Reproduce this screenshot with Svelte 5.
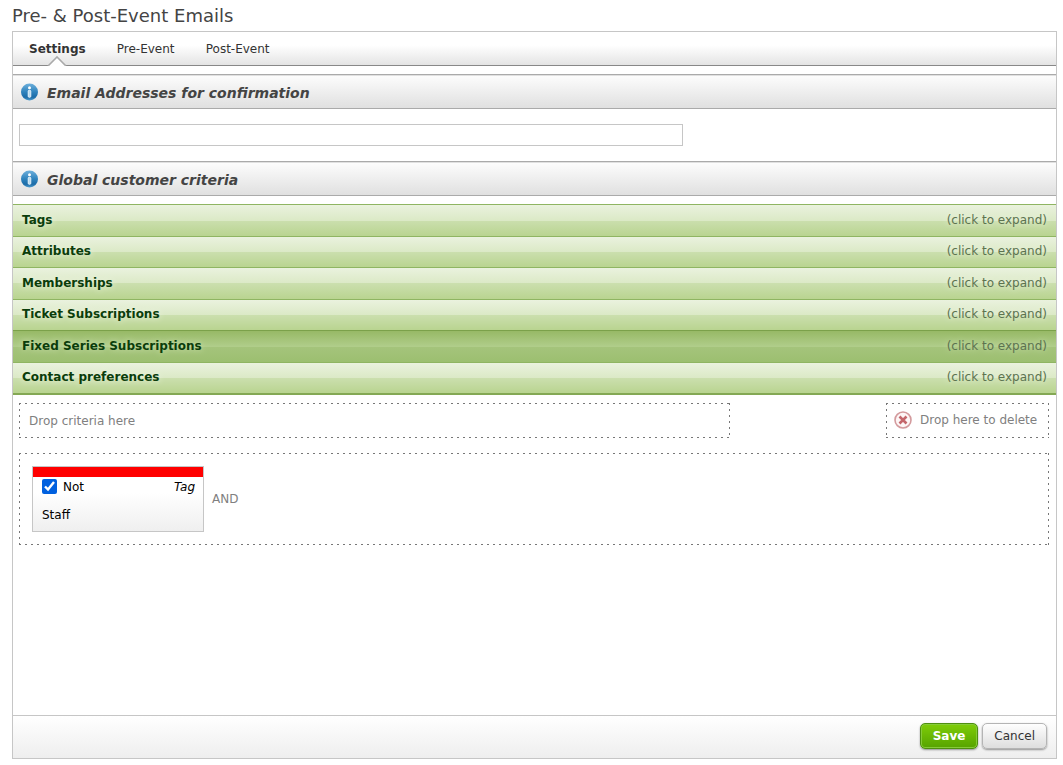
<script lang="ts">
	const tabs = ['Settings', 'Pre-Event', 'Post-Event'];
	const criteria = [
		'Tags',
		'Attributes',
		'Memberships',
		'Ticket Subscriptions',
		'Fixed Series Subscriptions',
		'Contact preferences'
	];

	let activeTab = $state('Settings');
	let selected = $state('Fixed Series Subscriptions');
	let emails = $state('');
	let not = $state(true);
</script>

{#snippet sectionHead(title: string)}
	<h2 class="section-head">
		<svg width="18" height="18" viewBox="0 0 18 18" aria-hidden="true">
			<defs>
				<linearGradient id="info-fill" x1="0" y1="0" x2="0" y2="1">
					<stop offset="0" stop-color="#6eb0dc" />
					<stop offset="0.5" stop-color="#2f83bd" />
					<stop offset="0.8" stop-color="#1c6ca8" />
					<stop offset="1" stop-color="#4f9dcf" />
				</linearGradient>
			</defs>
			<circle cx="8.5" cy="9" r="8.5" fill="url(#info-fill)" />
			<circle cx="8.5" cy="4.8" r="1.5" fill="#fff" />
			<rect x="7.2" y="7.3" width="2.6" height="7" rx="1" fill="#b5daf1" stroke="#fff" stroke-width="0.8" />
		</svg>
		<span>{title}</span>
	</h2>
{/snippet}

<div class="page">
	<h1>Pre- &amp; Post-Event Emails</h1>

	<main class="panel">
		<nav class="tabs">
			{#each tabs as tab (tab)}
				<button class="tab" class:active={tab === activeTab} onclick={() => (activeTab = tab)}>
					{tab}
					{#if tab === activeTab}
						<svg class="pointer" width="20" height="10" viewBox="0 0 20 10" aria-hidden="true">
							<path d="M1 10 L10 1 L19 10" fill="#fff" stroke="#aaa" stroke-width="1.6" />
						</svg>
					{/if}
				</button>
			{/each}
		</nav>

		{@render sectionHead('Email Addresses for confirmation')}
		<div class="field">
			<input type="text" aria-label="Email Addresses for confirmation" bind:value={emails} />
		</div>

		{@render sectionHead('Global customer criteria')}
		<div class="criteria">
			{#each criteria as name (name)}
				<button class="criterion" class:selected={name === selected} onclick={() => (selected = name)}>
					<strong>{name}</strong>
					<span>(click to expand)</span>
				</button>
			{/each}
		</div>

		<div class="drops">
			<div class="drop drop-add">Drop criteria here</div>
			<div class="drop drop-delete">
				<svg width="18" height="18" viewBox="0 0 18 18" aria-hidden="true">
					<circle cx="9" cy="9" r="8" fill="#fdf6f6" stroke="#d39a9d" stroke-width="1.6" />
					<path d="M5.5 5.5 L12.5 12.5 M12.5 5.5 L5.5 12.5" stroke="#c4666b" stroke-width="2.6" />
				</svg>
				Drop here to delete
			</div>
		</div>

		<div class="drop group">
			<div class="card">
				<div class="card-row">
					<label><input type="checkbox" bind:checked={not} />Not</label>
					<em>Tag</em>
				</div>
				<div class="card-name">Staff</div>
			</div>
			<span class="and">AND</span>
		</div>

		<footer>
			<button class="btn save">Save</button>
			<button class="btn cancel">Cancel</button>
		</footer>
	</main>
</div>

<style>
	:global(body) {
		background: #fff;
	}

	.page,
	.page button,
	.page input {
		font-family: Verdana, 'DejaVu Sans', sans-serif;
		font-size: 12px;
	}

	.page {
		display: flex;
		flex-direction: column;
		box-sizing: border-box;
		min-height: 100vh;
		padding: 0 6px 6px 12px;
		color: #333;
	}

	button {
		cursor: pointer;
	}

	h1 {
		margin: 0;
		height: 31px;
		font-size: 18px;
		font-weight: normal;
		line-height: 31px;
		color: #444;
	}

	.panel {
		display: flex;
		flex-direction: column;
		flex: 1;
		border: 1px solid #c6c6c6;
	}

	.tabs {
		display: flex;
		height: 33px;
		padding-left: 2px;
		border-bottom: 1px solid #888;
		background: linear-gradient(#fff 40%, #e4e4e4);
		margin-bottom: 8px;
	}

	.tab {
		position: relative;
		min-width: 92px;
		padding: 0 14px;
		border: 0;
		background: none;
		line-height: 32px;
		color: #333;
	}

	.tab.active {
		min-width: 0;
		font-weight: bold;
	}

	.pointer {
		position: absolute;
		bottom: -1px;
		left: 50%;
		margin-left: -10px;
	}

	.section-head {
		display: flex;
		align-items: center;
		gap: 8px;
		height: 33px;
		margin: 0;
		padding-left: 8px;
		border-top: 1px solid #aaa;
		border-bottom: 1px solid #aaa;
		background: linear-gradient(#fdfdfd, #e0e0e0);
		box-shadow: inset 0 1px #e0e0e0;
		font-size: 14px;
		font-style: italic;
		color: #444;
	}

	.section-head span {
		padding-top: 2px;
	}

	.field {
		padding: 15px 0 15px 6px;
	}

	.field input {
		display: block;
		box-sizing: border-box;
		width: 64%;
		height: 22px;
		border: 1px solid #c6c6c6;
	}

	.criteria {
		display: grid;
		grid-auto-rows: 1fr;
		height: 189px;
		margin: 8px 0;
		border-bottom: 2px solid #84a854;
	}

	.criterion {
		display: flex;
		align-items: center;
		justify-content: space-between;
		padding: 0 9px 1px;
		border: 0;
		border-top: 1px solid #8fb562;
		background: linear-gradient(#eaf2de, #dbe9c6 50%, #cbdfae 50%, #b9d490);
		color: #5c7350;
		text-shadow: 0 0 6px #eef5e2;
	}

	.criterion strong {
		color: #0b3d0b;
	}

	.criterion.selected {
		border-top-color: #7ba14a;
		background: linear-gradient(#97b966, #b0cd8a 50%, #a5c47c 50%, #9cbf70);
		text-shadow: 0 0 6px #cfe2b4;
	}

	.drops {
		display: flex;
		justify-content: space-between;
		padding: 0 7px 15px 6px;
	}

	/* dashes drawn as gradients for an even 6px rhythm */
	.drop {
		--dash: #777 0 2px, transparent 2px 6px;
		box-sizing: border-box;
		border: 1px solid transparent;
		background:
			repeating-linear-gradient(90deg, var(--dash)) top / 100% 1px no-repeat border-box,
			repeating-linear-gradient(90deg, var(--dash)) bottom / 100% 1px no-repeat border-box,
			repeating-linear-gradient(var(--dash)) left / 1px 100% no-repeat border-box,
			repeating-linear-gradient(var(--dash)) right / 1px 100% no-repeat border-box;
		color: #808080;
	}

	.drop-add {
		width: 69%;
		height: 35px;
		padding-left: 9px;
		line-height: 34px;
	}

	.drop-delete {
		display: flex;
		align-items: center;
		gap: 8px;
		min-width: 163px;
		padding: 0 8px 1px 7px;
	}

	.group {
		display: flex;
		gap: 8px;
		margin: 0 7px 0 6px;
		padding: 12px;
	}

	.card {
		box-sizing: border-box;
		width: 172px;
		height: 66px;
		padding: 0 8px 0 9px;
		border: 1px solid #c6c6c6;
		background: linear-gradient(#f00 10px, #fff 10px, #fff 40%, #efefef);
		color: #000;
	}

	.card-row {
		display: flex;
		align-items: center;
		justify-content: space-between;
		height: 19px;
		padding-top: 10px;
	}

	.card-row label {
		display: flex;
		align-items: center;
		gap: 6px;
	}

	.card-row input {
		width: 15px;
		height: 15px;
		margin: 0;
		accent-color: #0060df;
	}

	.card-name {
		line-height: 38px;
	}

	.and {
		align-self: center;
	}

	footer {
		display: flex;
		align-items: center;
		justify-content: flex-end;
		gap: 4px;
		height: 40px;
		margin-top: auto;
		padding: 0 9px 2px 0;
		border-top: 1px solid #c6c6c6;
		background: linear-gradient(#fff, #eee);
	}

	.btn {
		height: 26px;
		padding: 0 11px;
		border: 1px solid #b4b4b4;
		border-radius: 5px;
		background: linear-gradient(#fefefe, #dedede);
		box-shadow: 0 1px 2px rgba(0, 0, 0, 0.4);
		color: #333;
	}

	.page .save {
		padding: 0 12px;
		border-color: #4e8f10;
		background: linear-gradient(#7fcd08, #56a300);
		box-shadow: inset 0 0 0 1px #86cb38, 0 1px 2px rgba(0, 0, 0, 0.4);
		font-weight: bold;
		color: #fff;
	}
</style>
